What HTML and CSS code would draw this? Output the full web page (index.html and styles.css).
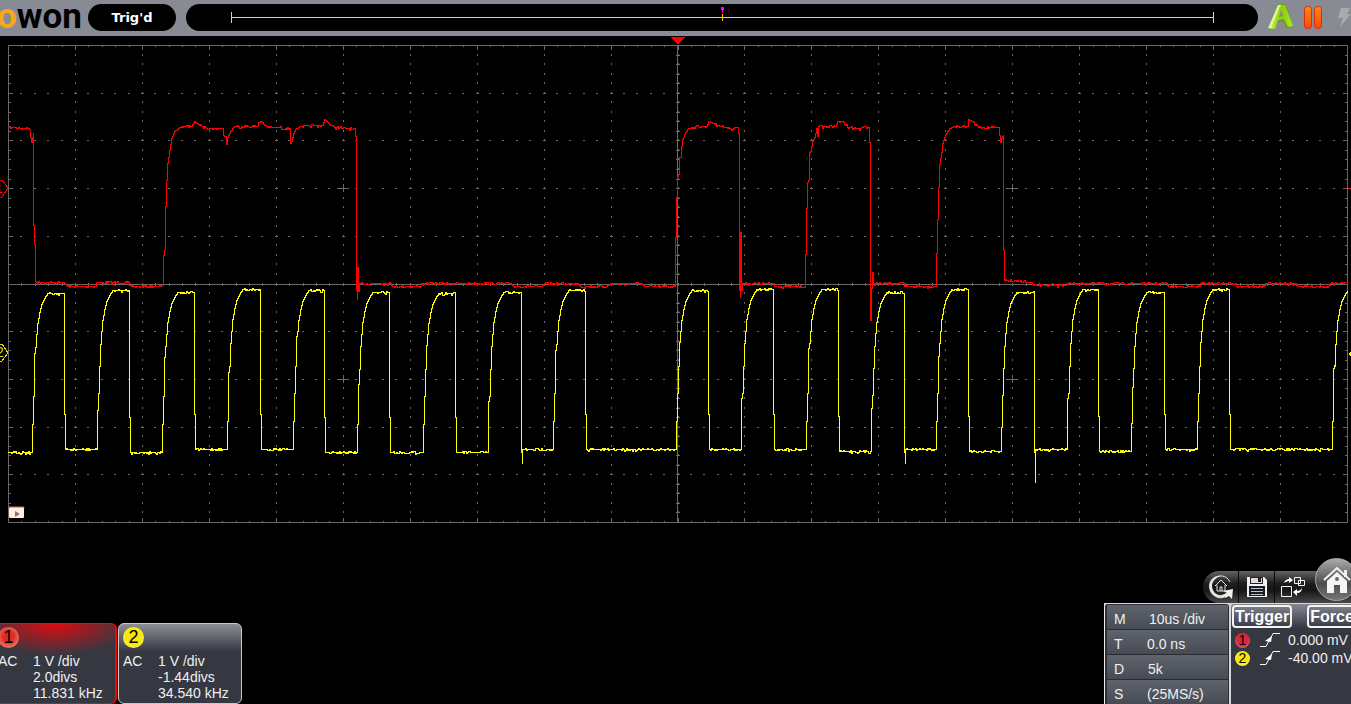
FILE: index.html
```html
<!DOCTYPE html>
<html lang="en">
<head>
<meta charset="utf-8">
<title>OWON oscilloscope</title>
<link rel="stylesheet" href="styles.css">
</head>
<body>
<header class="topbar">
  <div class="logo"><span class="logo-accent">o</span>won</div>
  <div class="status">Trig'd</div>
  <div class="memory"><div class="memory-track"><span class="memory-marker"></span></div></div>
  <svg class="run-icons" width="93" height="35" viewBox="0 0 93 35" aria-hidden="true">
    <defs>
      <linearGradient id="lime" x1="0" x2="1"><stop offset="0" stop-color="#b8f02a"/><stop offset=".5" stop-color="#8fc91c"/><stop offset="1" stop-color="#a4f01a"/></linearGradient>
      <linearGradient id="flame" x1="0" x2="0" y1="0" y2="1"><stop offset="0" stop-color="#ff8a14"/><stop offset="1" stop-color="#ff4606"/></linearGradient>
    </defs>
    <path d="M10 28 L20 4 L28 4 L35 26 L29 29 L25 22 L20 22 L16 30 Z M21 16 L25 15 L23 10 Z" fill="#6f9d20" fill-rule="evenodd"/>
    <path d="M10 28 L20 5 L24 5 L15 29 Z" fill="#ddf6a0"/>
    <path d="M13 29 L22 6 L27 5 L35 26 L30 27 L26 19 L20 20 L17 29 Z M21 17 L25 16 L23 10 Z" fill="url(#lime)" fill-rule="evenodd"/>
    <rect x="46.500" y="6.500" width="7" height="22" rx="3" fill="url(#flame)" stroke="#dc2a12"/>
    <rect x="56.500" y="6.500" width="7" height="22" rx="3" fill="url(#flame)" stroke="#dc2a12"/>
    <path d="M83 8 H92 L89 14 H93 L82 27 L85 18 H80 Z" fill="#aaa"/>
  </svg>
</header>

<main class="screen">
  <svg class="scope" viewBox="0 0 1351 494" role="img" aria-label="Channel 1 and channel 2 waveforms">
    <path id="grid" class="grid"/>
    <path id="trace1" class="trace trace-1"/>
    <path id="trace2" class="trace trace-2"/>
    <path d="M671 1 H685 L678 9 Z" fill="#f00"/>
    <g class="marker marker-1"><path d="M-8 144 H2 L8 152 L2 161 H-8"/><text x="-5" y="157">1</text></g>
    <g class="marker marker-2"><path d="M-8 308 H2 L8 317 L2 325 H-8"/><text x="-4" y="321">2</text></g>
    <path d="M1348 318 L1351 316 V320 Z" fill="#ff0"/>
    <path d="M1348 152 H1351 V153 H1348 Z" fill="#f00"/>
    <g class="play">
      <rect x="9" y="471" width="15" height="11" rx="1" fill="#ffeee0"/>
      <path d="M9 472 V471 H24 V472" fill="none" stroke="#8d7d85"/>
      <path d="M15 475 L20 478 L15 481 Z" fill="#857080"/>
    </g>
  </svg>
</main>

<footer class="panels">
  <section class="channels">
    <article class="channel channel-1">
      <span class="badge badge-red">1</span>
      <div class="coupling">AC</div>
      <div class="values"><div>1 V /div</div><div>2.0divs</div><div>11.831 kHz</div></div>
    </article>
    <article class="channel channel-2">
      <span class="badge badge-yellow">2</span>
      <div class="coupling">AC</div>
      <div class="values"><div>1 V /div</div><div>-1.44divs</div><div>34.540 kHz</div></div>
    </article>
  </section>

  <section class="controls">
    <nav class="toolbar">
      <button class="tool" aria-label="Reset view">
        <svg width="24" height="26" viewBox="0 0 24 26" fill="none" stroke="#e4e4e4">
          <path d="M21 8 C18 1 9 0 4 5 C-1 11 0 19 6 22 C10 25 15 24 18 21" stroke-width="1"/>
          <path d="M12 2 C3 1 -2 9 1 16 C4 24 13 26 18 21 L17 19 C12 23 6 21 4 16 C1 10 5 4 12 2 Z" fill="#e4e4e4" stroke="none"/>
          <path d="M14 17 L24 15 L23 25 L20 22 L16 24 L15 21 L18 19 Z" fill="#f0f0f0" stroke="none"/>
          <path d="M6 12 L12 6 L18 12 M8 11 V17 H16 V11 M11 17 V13 H13 V17"/>
        </svg>
      </button>
      <button class="tool" aria-label="Save">
        <svg width="22" height="22" viewBox="0 0 22 22">
          <path d="M1 1 H18 L21 4 V21 H1 Z" fill="#f2f2f2"/>
          <path d="M4 1 H17 V8 H4 Z" fill="#222"/><path d="M5 2 H16 V7 H5 Z" fill="#ddd"/><path d="M12 2 H15 V6 H12 Z" fill="#222"/>
          <path d="M3 10 H19 V20 H3 Z" fill="#1c1c1c"/>
          <path d="M5 12.500 H17 M5 15.500 H17 M5 18.500 H17" stroke="#b4c4d8"/>
        </svg>
      </button>
      <button class="tool" aria-label="Switch window">
        <svg width="26" height="22" viewBox="0 0 26 22" fill="none" stroke="#f4f4f4">
          <path d="M1.500 10.500 H11.500 V20.500 H1.500 Z"/>
          <path d="M14.500 1.500 H20.500 V7.500 H14.500 Z M18.500 4.500 H24.500 V9.500 H18.500 Z"/>
          <path d="M4 7 C5 4 7 3 9 3 V1 L13 4 L9 7 V5 C7 5 6 6 4 7 Z" fill="#fff" stroke="none"/>
          <path d="M22 12 C22 15 20 17 17 17 V20 L13 16 L17 13 V15 C19 15 21 14 22 12 Z" fill="#fff" stroke="none"/>
        </svg>
      </button>
      <button class="home" aria-label="Home">
        <svg width="30" height="30" viewBox="0 0 30 30">
          <path d="M22 5 H25 V12 H22 Z" fill="#eee"/>
          <path d="M2 15 L15 3 L28 15" fill="none" stroke="#f4f4f4" stroke-width="2"/>
          <path d="M15 7 L25 16 V28 H18 V20 H12 V28 H5 V16 Z" fill="#f4f4f4"/>
          <circle cx="15" cy="14" r="2" fill="#666"/>
        </svg>
      </button>
    </nav>
    <div class="readouts">
      <dl class="timebase">
        <div><dt>M</dt><dd>10us /div</dd></div>
        <div><dt>T</dt><dd>0.0 ns</dd></div>
        <div><dt>D</dt><dd>5k</dd></div>
        <div><dt>S</dt><dd>(25MS/s)</dd></div>
      </dl>
      <div class="trigger">
        <div class="trigger-buttons"><button>Trigger</button><button>Force</button></div>
        <div class="source">
          <span class="badge badge-small badge-red">1</span>
          <svg width="22" height="16" viewBox="0 0 22 16"><path d="M1 14.500 H7 L14 1.500 H21" fill="none" stroke="#fff"/><path d="M13 4 L6 9 L12 10 Z" fill="#fff"/></svg>
          <span>0.000 mV</span>
        </div>
        <div class="source">
          <span class="badge badge-small badge-yellow">2</span>
          <svg width="22" height="16" viewBox="0 0 22 16"><path d="M1 14.500 H7 L14 1.500 H21" fill="none" stroke="#fff"/><path d="M13 4 L6 9 L12 10 Z" fill="#fff"/></svg>
          <span>-40.00 mV</span>
        </div>
      </div>
    </div>
  </section>
</footer>
<script src="scope.js"></script>
</body>
</html>
```

FILE: styles.css
```css
* { box-sizing: border-box; }

body {
  margin: 0;
  height: 100vh;
  display: flex;
  flex-direction: column;
  overflow: hidden;
  background: #000;
  color: #f0f0f0;
  font: 14px/16px "Liberation Sans", Arial, sans-serif;
}

button { margin: 0; padding: 0; border: 0; background: none; color: inherit; font: inherit; }

.topbar {
  flex: none;
  display: flex;
  align-items: center;
  height: 36px;
  padding-bottom: 1px;
  background: #888b94;
}
.logo {
  width: 88px;
  margin-top: -2px;
  text-indent: -3px;
  color: #000;
  font: bold 35px/34px Roboto, sans-serif;
}
.logo-accent { color: #f5a81c; }
.status, .memory { height: 27px; border-radius: 14px; background: #000; }
.status {
  width: 88px;
  margin-right: 10px;
  text-align: center;
  color: #fff;
  font: bold 13px/27px "DejaVu Sans", sans-serif;
}
.memory { flex: 1; padding: 8px 44px 0 45px; }
.memory-track {
  position: relative;
  height: 11px;
  border: solid #d0d0d0;
  border-width: 0 1px;
  background: linear-gradient(#d0d0d0, #d0d0d0) center / 100% 1px no-repeat;
}
.memory-marker {
  position: absolute;
  left: calc(50% - 2px);
  top: -5px;
  width: 3px;
  height: 14px;
  background:
    linear-gradient(#f0f, #f0f) top / 3px 3px no-repeat,
    linear-gradient(#f0f 6px, #000 6px 7px, #fb0 7px) center / 1px 100% no-repeat;
}
.run-icons { flex: none; }

.scope { display: block; width: 100%; shape-rendering: crispEdges; }
.grid { fill: none; stroke: #696969; }
.trace { fill: none; stroke-width: 1; }
.trace-1 { stroke: #f00; }
.trace-2 { stroke: #ff0; }
.marker path { fill: none; }
.marker text { font-size: 14px; }
.marker-1 path { stroke: #e00; }
.marker-1 text { fill: #f00; }
.marker-2 path { stroke: #dede00; }
.marker-2 text { fill: #dede00; }
.play { shape-rendering: geometricPrecision; }

.panels {
  flex: none;
  display: flex;
  justify-content: space-between;
  align-items: flex-end;
  margin-top: auto;
}

.channels { display: flex; gap: 1px; margin-left: -7px; }
.channel {
  display: grid;
  grid-template-columns: 35px 1fr;
  grid-template-rows: 26px auto;
  width: 124px;
  padding: 3px 0 2px 4px;
  border: 1px solid #c8c8c8;
  border-radius: 6px;
}
.channel .badge { grid-column: 1 / -1; }
.channel-1 {
  border-color: #f00;
  border-right-width: 2px;
  background: radial-gradient(ellipse 80px 32px at 50% 0, #dc0c10, #353741) #353741;
}
.channel-2 { background: linear-gradient(#8c8e94, #353741 28px); }

.badge {
  width: 21px;
  height: 21px;
  border-radius: 50%;
  text-align: center;
  color: #000;
  font-size: 18px;
  line-height: 21px;
}
.badge-small { width: 15px; height: 15px; font-size: 14px; line-height: 15px; }
.badge-red { background: radial-gradient(circle at 50% 45%, #e02c20 35%, #f4a898); }
.badge-small.badge-red { background: radial-gradient(circle at 50% 40%, #d8283c 50%, #f08090); }
.badge-yellow { background: radial-gradient(circle at 50% 45%, #f8e800 45%, #fff890); }

.controls { display: flex; flex-direction: column; align-items: flex-end; width: 247px; }
.toolbar {
  position: relative;
  display: flex;
  width: 148px;
  height: 32px;
  border-radius: 16px 0 0 16px;
  background: linear-gradient(#646464, #1c1c1c 40%, #161616 60%, #484848);
}
.tool {
  display: flex;
  align-items: center;
  justify-content: center;
  width: 36px;
  border-right: 1px solid #0a0a0a;
}
.tool:nth-child(3) { border: 0; }
.home {
  position: absolute;
  right: -7px;
  top: -13px;
  width: 43px;
  height: 43px;
  display: flex;
  align-items: center;
  justify-content: center;
  border: 1px solid #aaa;
  border-radius: 50%;
  background: linear-gradient(#aaa, #4c4c4c 60%, #777);
}

.readouts { display: flex; width: 100%; height: 101px; padding-top: 1px; background: #d6d6d8; }
.timebase {
  width: 125px;
  margin: 0;
  padding: 1px 1px 0 2px;
  border-left: 1px solid #eee;
  border-radius: 3px 3px 0 0;
  background: #2e3038;
}
.timebase div {
  display: flex;
  align-items: center;
  height: 25px;
  padding: 4px 0 0 7px;
  border-bottom: 1px solid #2a2c34;
  background: linear-gradient(#5f636b, #474b55);
}
.timebase dt { width: 35px; }
.timebase dd { margin: 0; }
.timebase div:nth-child(2) dt, .timebase div:nth-child(4) dt { width: 33px; }
.timebase div:nth-child(3) dt { width: 34px; }

.trigger {
  flex: 1;
  min-width: 0;
  margin-left: 2px;
  overflow: hidden;
  border-radius: 3px 0 0 0;
  background: linear-gradient(#858891, #353741 24px);
}
.trigger-buttons { display: flex; gap: 15px; padding: 1px 0 3px 1px; }
.trigger-buttons button {
  flex: none;
  height: 23px;
  padding: 0 1px;
  border: 2px solid #f4f4f4;
  border-radius: 4px;
  color: #fff;
  font: bold 16px/19px "Liberation Sans", Arial, sans-serif;
}
.source { display: flex; align-items: center; height: 18px; padding-left: 4px; white-space: nowrap; }
.source svg { flex: none; margin: 0 7px 0 9px; }
.source .badge { flex: none; }
```

FILE: scope.js
```js
// Graticule: 20 x 10 divisions, each split in five.
const LEFT = 8, RIGHT = 1347, TOP = 9, BOTTOM = 486, MID_X = 677, MID_Y = 248;
const colX = n => Math.round(LEFT + n * (RIGHT - LEFT) / 100);
const rowY = n => Math.round(TOP + n * (BOTTOM - TOP) / 50);
const h = (x, y, w) => `M${x} ${y + 0.5}h${w}`;
const v = (x, y, l) => `M${x + 0.5} ${y}v${l}`;

function graticule() {
  let d = h(LEFT, TOP, RIGHT - LEFT + 1) + h(LEFT, BOTTOM, RIGHT - LEFT + 1) +
    v(LEFT, TOP, BOTTOM - TOP + 1) + v(RIGHT, TOP, BOTTOM - TOP + 1) +
    h(LEFT, MID_Y, RIGHT - LEFT) + v(MID_X, TOP, BOTTOM - TOP);
  for (let i = 1; i < 100; i++) {
    const x = colX(i), major = i % 5 === 0, t = major ? 5 : 2;
    d += v(x, TOP, t) + v(x, BOTTOM - t + 1, t) + v(x, MID_Y - 1, 3);
    for (let j = 5; j < 50; j += 5) d += h(x - 1, rowY(j), major ? 3 : 2);
  }
  for (let j = 1; j < 50; j++) {
    const y = rowY(j), t = j % 5 === 0 ? 5 : 3;
    d += h(LEFT, y, t) + h(RIGHT - t + 1, y, t) + h(MID_X - 1, y, 4);
    for (let i = 5; i < 100; i += 5) d += v(colX(i), y - 1, 2);
  }
  for (const i of [25, 75]) for (const j of [15, 35])
    d += h(colX(i) - 6, rowY(j), 12) + v(colX(i), rowY(j) - 4, 8);
  return d;
}

let seed = 7;
const random = () => (seed = (seed * 16807) % 2147483647) / 2147483647;

// Joins the points in pixel steps; level stretches get sampling noise.
function trace(points) {
  let [px, py] = points[0];
  let d = `M${px} ${py - 35.5}`;
  for (const [x, y] of points.slice(1)) {
    const level = x - px >= 5 && Math.abs(y - py) <= 3;
    for (let i = px + 1; i < x; i++) {
      const r = level ? random() : 0.5;
      const n = r < 0.2 ? -1 : r > 0.97 ? 2 : r > 0.74 ? 1 : 0;
      const mid = Math.round(py + (y - py) * (i - px) / (x - px));
      d += `H${i + 0.5}V${mid + n - 35.5}`;
    }
    d += `H${x + 0.5}V${y - 35.5}`;
    [px, py] = [x, y];
  }
  return d;
}

const channel1 = [
  8,127, 30,128, 30,137, 31,142, 32,137, 33,132, 33,225, 34,244, 35,281, 36,282, 63,282,
  67,286, 95,286, 96,282, 128,282, 131,286, 160,286, 163,284, 163,255, 164,250, 165,206,
  166,180, 167,163, 169,150, 171,138, 174,131, 178,128, 181,126, 191,126, 194,121, 198,124,
  204,126, 206,128, 222,128, 223,135, 225,136, 226,144, 227,137, 229,133, 232,128, 234,126,
  257,126, 258,122, 261,121, 264,125, 272,127, 289,128, 290,143, 291,141, 293,133, 295,129,
  299,126, 322,125, 324,119, 326,121, 330,125, 336,127, 355,129, 355,136, 356,136, 356,290,
  357,299, 357,267, 358,291, 359,283, 390,283, 392,286, 420,286, 421,283, 510,283, 513,286,
  541,286, 544,283, 577,283, 580,286, 606,286, 610,283, 641,283, 644,286, 675,286, 675,237,
  676,237, 676,197, 677,197, 677,176, 679,172, 679,157, 680,157, 681,146, 682,139, 685,132,
  688,128, 695,126, 706,126, 708,121, 711,122, 714,124, 721,126, 729,128, 737,127, 738,133,
  739,135, 739,290, 740,297, 740,232, 741,290, 742,283, 773,283, 774,286, 805,286, 805,254,
  806,208, 807,182, 809,178, 809,152, 810,151, 812,141, 814,137, 816,128, 817,136, 818,126,
  835,126, 837,121, 842,121, 845,125, 853,128, 868,127, 869,142, 870,142, 870,320, 871,288,
  872,272, 873,283, 903,283, 904,286, 935,286, 936,253, 937,219, 938,187, 939,164, 941,152,
  942,143, 945,134, 949,128, 953,126, 967,126, 968,119, 972,121, 975,125, 980,127, 998,127,
  1000,142, 1001,138, 1003,134, 1003,250, 1004,280, 1031,282, 1033,285, 1065,285, 1066,283,
  1166,283, 1168,286, 1199,286, 1200,283, 1235,283, 1236,286, 1263,286, 1265,283, 1295,283,
  1297,286, 1328,286, 1330,283, 1347,283
];

// Clock pulses: low level before, rise x, kink y, high level, fall x, undershoot y.
const pulses = [
  [452, 32, 353, 293, 64], [449, 97, 410, 290, 129], [452, 162, 357, 292, 194],
  [449, 227, 372, 289, 260], [449, 293, 336, 290, 324], [452, 357, 384, 292, 389],
  [452, 423, 345, 293, 455], [452, 488, 401, 292, 521, 463], [449, 553, 350, 290, 585],
  [449, 676, 342, 290, 708], [449, 741, 398, 289, 773], [449, 806, 348, 289, 838],
  [451, 871, 408, 292, 904, 463], [449, 936, 356, 289, 968], [451, 1001, 427, 292, 1034, 482],
  [449, 1067, 398, 289, 1098], [451, 1131, 387, 292, 1164], [449, 1197, 342, 289, 1229],
  [449, 1332, 368, 290, null]
];
const EDGE = [[1, 0.35], [2, 0.52], [3, 0.66], [4, 0.74], [5, 0.81], [7, 0.88], [9, 0.93], [12, 0.97], [15, 1]];

function clock() {
  const points = [[8, 452]];
  pulses.forEach(([low, rise, kink, high, fall, under], i) => {
    points.push([rise - 1, low]);
    let kinked = false;
    for (const [dx, part] of EDGE) {
      const y = Math.round(low + (high - low) * part);
      if (!kinked && y < kink) {
        points.push([rise + dx - 1, kink], [rise + dx, kink - 4]);
        kinked = true;
      }
      points.push([rise + dx, y]);
    }
    if (fall === null) return;
    const after = pulses[i + 1][0];
    points.push([fall, high]);
    if (under) points.push([fall, after + 3], [fall + 1, under]);
    else points.push([fall, after - 35]);
    points.push([fall + 1, after]);
  });
  return points;
}

const pairs = [];
for (let i = 0; i < channel1.length; i += 2) pairs.push([channel1[i], channel1[i + 1]]);
document.getElementById("grid").setAttribute("d", graticule());
document.getElementById("trace1").setAttribute("d", trace(pairs));
document.getElementById("trace2").setAttribute("d", trace(clock()));
```
